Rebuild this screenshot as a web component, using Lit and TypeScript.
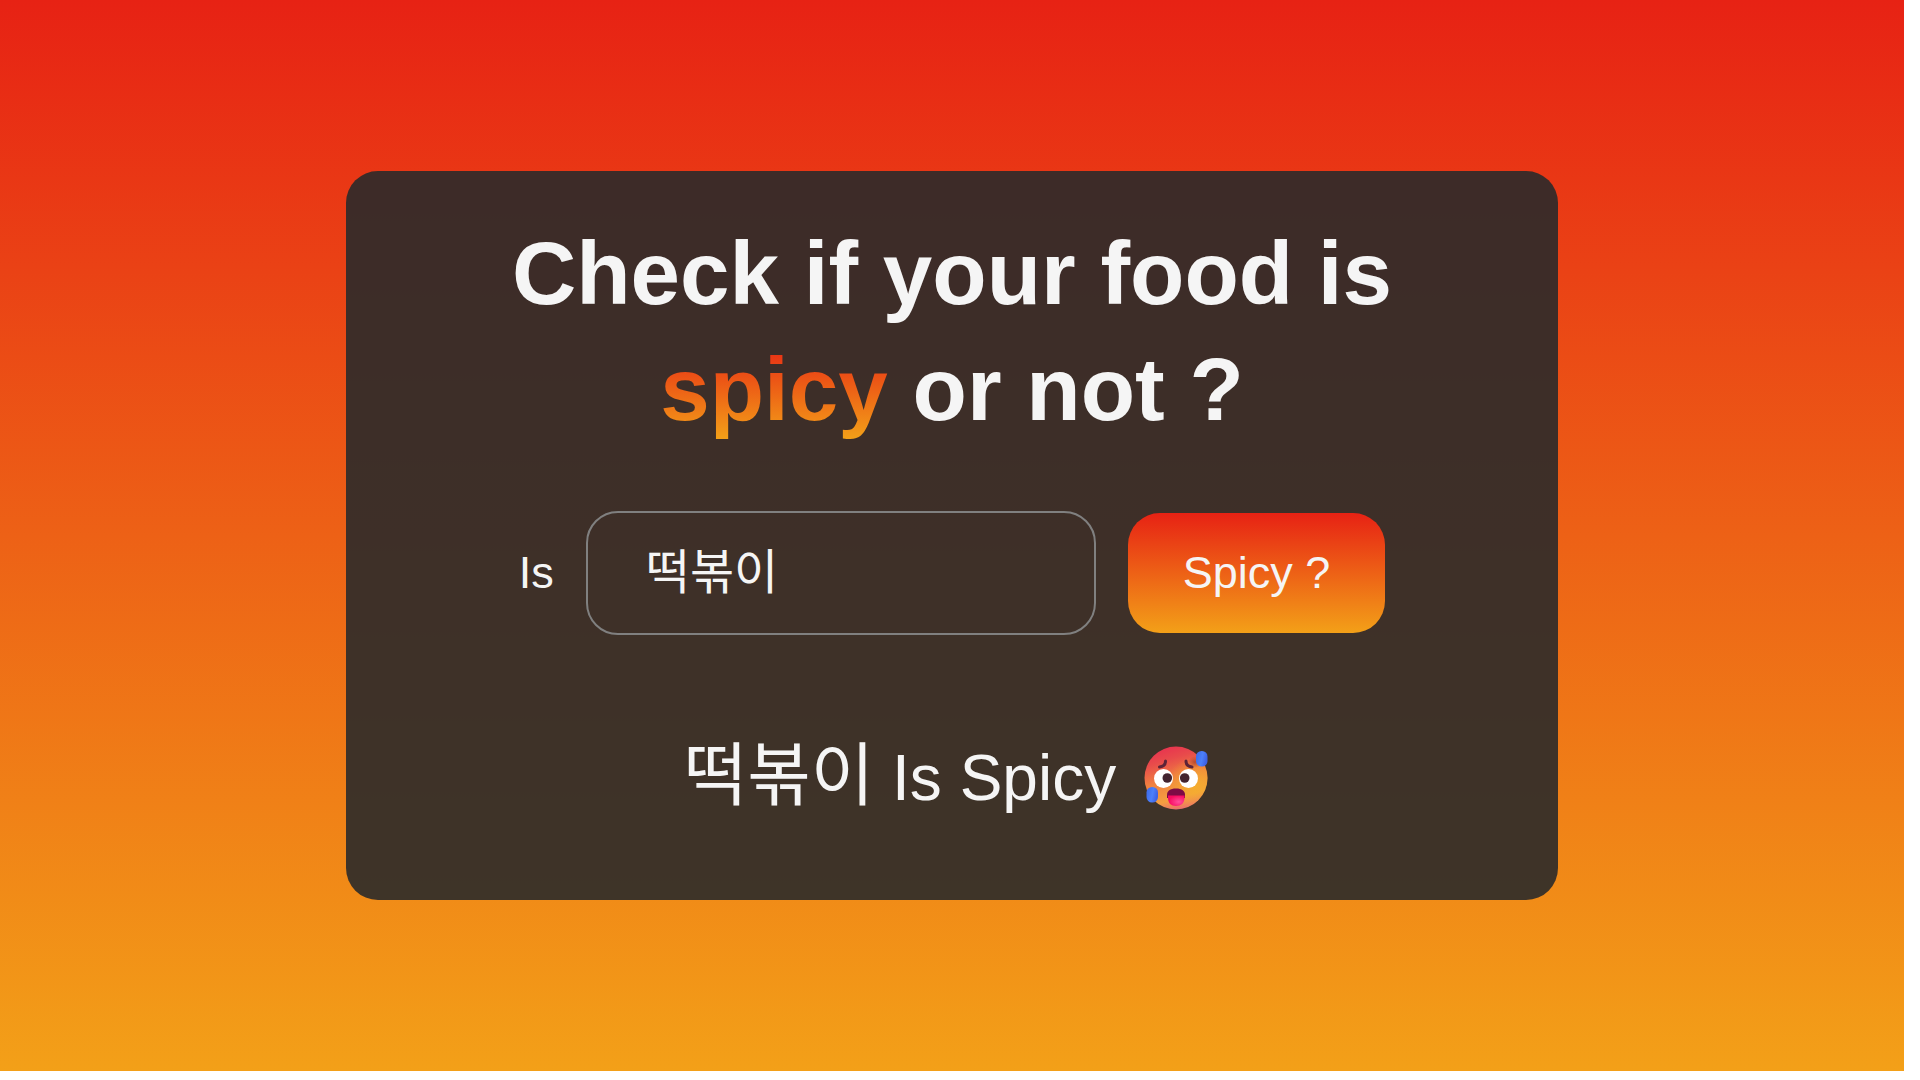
import { LitElement, html, css } from "lit";
import { customElement, state } from "lit/decorators.js";

@customElement("hot-face")
class HotFace extends LitElement {
  static styles = css`
    :host {
      display: block;
      flex: none;
      width: 64px;
      height: 64px;
    }
    .face {
      display: block;
      width: 100%;
      height: 100%;
    }
  `;

  render() {
    return html`
      <svg class="face" viewBox="0 0 64 64" role="img" aria-label="Hot face">
        <defs>
          <linearGradient id="skin" x1="0.35" y1="0" x2="0.65" y2="1">
            <stop offset="0" stop-color="#e8334f" />
            <stop offset="0.2" stop-color="#e84b4b" />
            <stop offset="0.5" stop-color="#f08240" />
            <stop offset="0.8" stop-color="#f4a040" />
            <stop offset="1" stop-color="#e8607a" />
          </linearGradient>
          <radialGradient id="glow" cx="0.8" cy="0.62" r="0.45">
            <stop offset="0" stop-color="#f5b02c" stop-opacity="0.9" />
            <stop offset="1" stop-color="#f5b02c" stop-opacity="0" />
          </radialGradient>
          <radialGradient id="shade" cx="0.5" cy="0.5" r="0.5">
            <stop offset="0" stop-color="#a8402a" stop-opacity="0.8" />
            <stop offset="1" stop-color="#a8402a" stop-opacity="0" />
          </radialGradient>
          <linearGradient id="drop" x1="0" y1="0" x2="1" y2="0.3">
            <stop offset="0" stop-color="#3a68e8" />
            <stop offset="0.6" stop-color="#4c80fa" />
            <stop offset="1" stop-color="#3d62e6" />
          </linearGradient>
          <radialGradient id="tongue" cx="0.65" cy="0.6" r="0.6">
            <stop offset="0" stop-color="#ff4f9c" />
            <stop offset="1" stop-color="#f80a60" />
          </radialGradient>
        </defs>
        <circle cx="32" cy="32" r="31.5" fill="url(#skin)" />
        <circle cx="32" cy="32" r="31.5" fill="url(#glow)" />
        <ellipse cx="51" cy="16" rx="7" ry="6" fill="url(#shade)" />
        <g fill="none" stroke="#5c2338" stroke-width="3" stroke-linecap="round">
          <path d="M15.500 21C19.500 20.500 21.500 18.500 21.500 15" />
          <path d="M48 21C44 20.500 42 18.500 42 15" />
        </g>
        <circle cx="19.500" cy="32.500" r="9.500" fill="#fff" />
        <circle cx="44.500" cy="32.500" r="9.500" fill="#fff" />
        <circle cx="23.300" cy="32" r="4.800" fill="#43242f" />
        <circle cx="40.700" cy="32" r="4.800" fill="#43242f" />
        <path d="M23 52V49C23 45 26 42.500 32 42.500S41 45 41 49V52Z" fill="#7d0b45" />
        <path d="M24 49.500H40.500V52C40.500 57 37 60 32 60S24 57 24 52Z" fill="url(#tongue)" />
        <rect x="2.500" y="41" width="11.500" height="15.500" rx="5.500" fill="url(#drop)" />
        <rect x="52" y="5" width="11.500" height="15.500" rx="5.500" fill="url(#drop)" />
      </svg>
    `;
  }
}

@customElement("app-root")
class AppRoot extends LitElement {
  static styles = css`
    :host {
      display: block;
      box-sizing: border-box;
      height: 100vh;
      padding: 0 16px 9px 0;
      background: #fff;
      color: #f5f5f5;
      font-family: "Liberation Sans", "Noto Sans CJK KR", sans-serif;
    }
    .page {
      display: flex;
      align-items: center;
      justify-content: center;
      height: 100%;
      background: linear-gradient(#e72214, #f3a018);
    }
    .card {
      box-sizing: border-box;
      display: flex;
      flex-direction: column;
      align-items: center;
      width: 1212px;
      max-width: 100%;
      padding: 44px 128px 74px;
      border-radius: 32px;
      background: rgba(42, 42, 42, 0.9);
    }
    .title {
      margin: 0;
      font-size: 89px;
      line-height: 116px;
      font-weight: 700;
      text-align: center;
    }
    .hot {
      background: linear-gradient(#e72214, #f3a018);
      -webkit-background-clip: text;
      background-clip: text;
      color: transparent;
    }
    .form {
      display: flex;
      align-items: center;
      gap: 32px;
      margin-top: 64px;
      font-size: 45px;
      line-height: 52px;
    }
    .food {
      box-sizing: border-box;
      width: 510px;
      height: 124px;
      padding: 0 58px 10px;
      border: 2px solid #808080;
      border-radius: 32px;
      background: transparent;
      color: inherit;
      font-family: inherit;
      font-size: 48px;
      outline: none;
    }
    .check {
      height: 120px;
      padding: 0 55px;
      border: 0;
      border-radius: 32px;
      background: linear-gradient(#e72214, #f3a018);
      color: inherit;
      font: inherit;
      cursor: pointer;
    }
    .result {
      display: flex;
      align-items: center;
      gap: 28px;
      margin: 94px 0 0;
      padding-right: 12px;
      font-size: 64px;
      line-height: 96px;
    }
    .name {
      font-size: 69px;
    }
  `;

  @state() private food = "떡볶이";

  private onInput(e: Event) {
    this.food = (e.target as HTMLInputElement).value;
  }

  render() {
    return html`
      <main class="page">
        <section class="card">
          <h1 class="title">Check if your food is <span class="hot">spicy</span> or not ?</h1>
          <form class="form" @submit=${(e: Event) => e.preventDefault()}>
            <label for="food">Is</label>
            <input id="food" class="food" type="text" .value=${this.food} @input=${this.onInput} />
            <button class="check" type="submit">Spicy ?</button>
          </form>
          <p class="result">
            <span><span class="name">${this.food}</span> Is Spicy</span>
            <hot-face></hot-face>
          </p>
        </section>
      </main>
    `;
  }
}
